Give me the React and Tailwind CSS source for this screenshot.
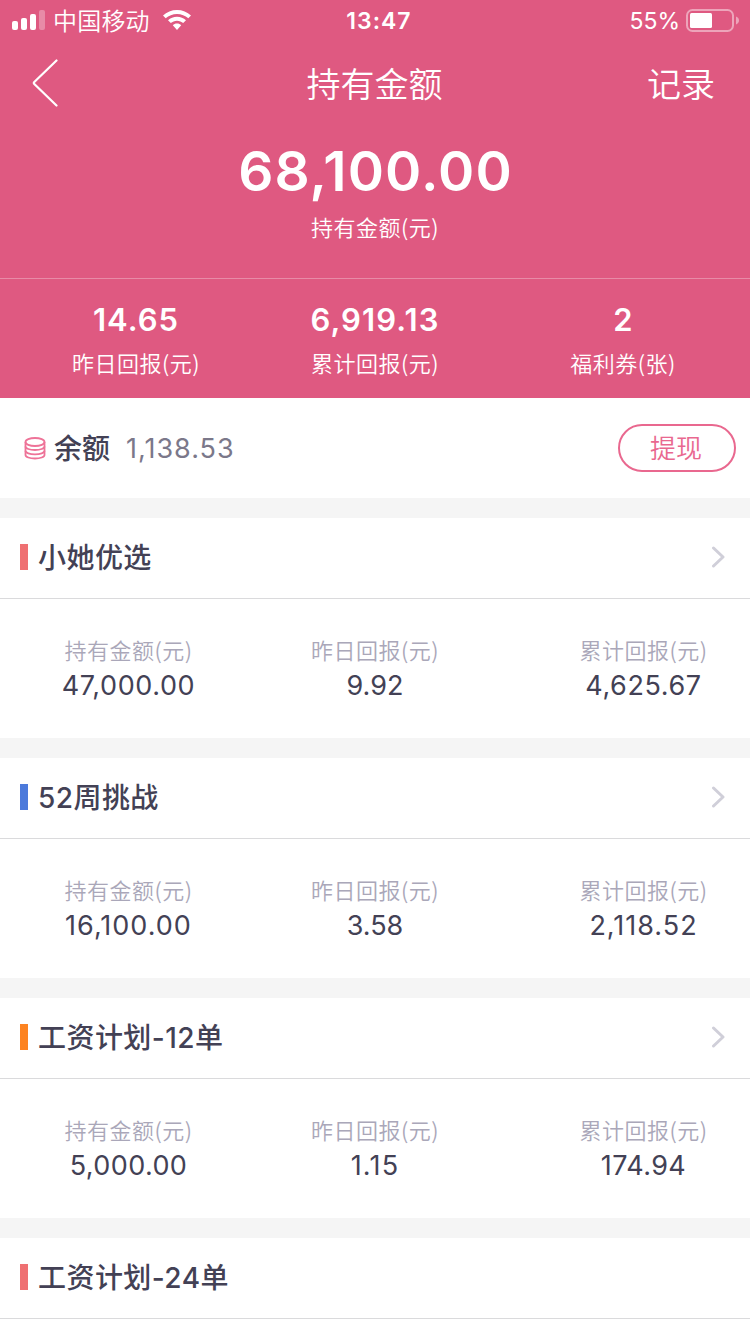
const summary = [
  { value: '14.65', label: '昨日回报(元)', spacing: 'tracking-[1px]' },
  { value: '6,919.13', label: '累计回报(元)', spacing: 'tracking-[1.1px]' },
  { value: '2', label: '福利券(张)', spacing: '' },
];

const plans = [
  {
    name: '小她优选',
    bar: 'bg-[#ef7072]',
    stats: [
      { label: '持有金额(元)', value: '47,000.00', spacing: 'tracking-[0.6px]' },
      { label: '昨日回报(元)', value: '9.92', spacing: '' },
      { label: '累计回报(元)', value: '4,625.67', spacing: 'tracking-[0.6px]' },
    ],
  },
  {
    name: '52周挑战',
    bar: 'bg-[#4c7adb]',
    stats: [
      { label: '持有金额(元)', value: '16,100.00', spacing: 'tracking-[1px]' },
      { label: '昨日回报(元)', value: '3.58', spacing: '' },
      { label: '累计回报(元)', value: '2,118.52', spacing: 'tracking-[1px]' },
    ],
  },
  {
    name: '工资计划-12单',
    bar: 'bg-[#fd8321]',
    stats: [
      { label: '持有金额(元)', value: '5,000.00', spacing: 'tracking-[0.4px]' },
      { label: '昨日回报(元)', value: '1.15', spacing: 'tracking-[1.2px]' },
      { label: '累计回报(元)', value: '174.94', spacing: 'tracking-[0.4px]' },
    ],
  },
  { name: '工资计划-24单', bar: 'bg-[#ef7072]' },
];

function StatusBar() {
  return (
    <div className="grid h-10 grid-cols-3 items-center pl-3 pr-[11px] text-[24px] leading-8">
      <div className="flex items-center">
        <svg width="33" height="20" viewBox="0 0 33 20" fill="#fff">
          <rect x="0" y="11" width="6" height="9" rx="2" />
          <rect x="9" y="8" width="6" height="12" rx="2" />
          <rect x="18" y="4" width="6" height="16" rx="2" />
          <rect x="27" y="0" width="6" height="20" rx="2" opacity="0.3" />
        </svg>
        <span className="ml-2 mt-1 whitespace-nowrap font-[350] tracking-[0.2px]">中国移动</span>
        <svg className="ml-[13px]" width="28" height="20" viewBox="0 0 28 20" fill="#fff">
          <path d="M14 0C8.600 0 3.700 2 0 5.500L2.700 8.300C5.700 5.500 9.700 3.900 14 3.900s8.300 1.600 11.300 4.400L28 5.500C24.300 2 19.400 0 14 0z" />
          <path d="M14 6.800c-3.500 0-6.600 1.300-9 3.500l2.800 2.800c1.600-1.500 3.800-2.400 6.200-2.400s4.600.9 6.200 2.400l2.800-2.800c-2.400-2.200-5.500-3.500-9-3.500z" />
          <path d="M14 13.600c-1.700 0-3.100.6-4.200 1.600L14 20l4.200-4.800c-1.100-1-2.500-1.600-4.200-1.600z" />
        </svg>
      </div>
      <span className="mt-0.5 pl-[7px] text-center text-[23px] font-semibold tracking-[1px]">13:47</span>
      <div className="flex items-center justify-end">
        <span className="mt-px text-[23px]">55%</span>
        <svg className="ml-[6px]" width="53" height="23" viewBox="0 0 53 23">
          <rect x="1" y="1" width="46" height="21" rx="5.500" fill="none" stroke="#fff" strokeOpacity="0.45" strokeWidth="2" />
          <rect x="4" y="4" width="22" height="15" rx="1.500" fill="#fff" />
          <path d="M50 7.500c2 .8 3 2.200 3 4s-1 3.200-3 4z" fill="#fff" fillOpacity="0.45" />
        </svg>
      </div>
    </div>
  );
}

function Stat({ label, value, spacing }) {
  return (
    <div className="flex flex-col items-center last:pl-[44px]">
      <span className="font-['Noto_Sans_CJK_SC',sans-serif] text-[22px] font-[350] leading-8 tracking-[0.5px] text-[#aaa7b9]">{label}</span>
      <span className={`mt-0.5 text-[27px] leading-[38px] text-[#434155] ${spacing}`}>{value}</span>
    </div>
  );
}

function Plan({ plan }) {
  return (
    <section className="mt-5 bg-white">
      <div className="flex h-[81px] items-center border-b border-[#dadadc] pl-5 pr-[25px]">
        <span className={`h-[26px] w-2 -translate-y-px ${plan.bar}`} />
        <h2 className="mb-px ml-[10px] flex-1 text-[28px] font-medium leading-10 tracking-[0.45px] text-[#434155]">{plan.name}</h2>
        {plan.stats && (
          <svg className="mb-[3px]" width="14" height="22" viewBox="0 0 14 22" fill="none" stroke="#d0cfd9" strokeWidth="3" strokeLinecap="round" strokeLinejoin="round">
            <path d="M2.500 2L12 11L2.500 20" />
          </svg>
        )}
      </div>
      {plan.stats ? (
        <div className="grid h-[139px] grid-cols-[257px_236px_1fr] pt-[34px]">
          {plan.stats.map((s) => (
            <Stat key={s.label} {...s} />
          ))}
        </div>
      ) : (
        <div className="h-[15px]" />
      )}
    </section>
  );
}

export default function App() {
  return (
    <div className="h-[1334px] w-[750px] overflow-hidden bg-[#f5f5f5] font-['Inter','Noto_Sans_CJK_SC',sans-serif]">
      <header className="h-[398px] bg-[#df5981] text-white">
        <StatusBar />
        <nav className="grid h-[88px] grid-cols-[1fr_auto_1fr] items-center pl-8 pr-[35px] text-[34px] font-[350] leading-[48px]">
          <svg className="mb-[2px]" width="26" height="48" viewBox="0 0 26 48" fill="none" stroke="#fff" strokeWidth="2.200" strokeLinecap="round" strokeLinejoin="round">
            <path d="M24.500 1.500L2.300 23q-1 1 0 2L24.500 46.500" />
          </svg>
          <h1 className="mt-[2px] pl-[2px]">持有金额</h1>
          <span className="mt-[2px] text-right">记录</span>
        </nav>
        <div className="flex h-[151px] flex-col items-center border-b border-white/30 pt-[9px]">
          <span className="pl-px text-[55px] font-semibold leading-[68px] tracking-[1.1px]">68,100.00</span>
          <span className="mt-[5px] font-['Noto_Sans_CJK_SC',sans-serif] text-[22px] font-[350] leading-8 tracking-[0.5px]">持有金额(元)</span>
        </div>
        <div className="grid grid-cols-[272px_206px_1fr] pt-[21px]">
          {summary.map((s) => (
            <div key={s.label} className="flex flex-col items-center last:pl-[18px]">
              <span className={`text-[31px] font-semibold leading-10 ${s.spacing}`}>{s.value}</span>
              <span className="mt-[6px] font-['Noto_Sans_CJK_SC',sans-serif] text-[22px] font-[350] leading-8 tracking-[0.5px]">{s.label}</span>
            </div>
          ))}
        </div>
      </header>

      <section className="flex h-[100px] items-center bg-white pl-6 pr-[14px]">
        <svg width="22" height="24" viewBox="0 0 22 24" fill="none" stroke="#ee7398" strokeWidth="1.800">
          <ellipse cx="11" cy="6" rx="9.500" ry="4" />
          <path d="M1.500 6v13c0 2 4.200 3.500 9.500 3.500s9.500-1.500 9.500-3.500V6" />
          <path d="M1.500 10.500c0 2 4.200 3.500 9.500 3.500s9.500-1.500 9.500-3.500M1.500 14.800c0 2 4.200 3.500 9.500 3.500s9.500-1.500 9.500-3.500" />
        </svg>
        <span className="ml-2 mt-[2px] text-[28px] font-medium leading-10 text-[#434155]">余额</span>
        <span className="ml-4 mt-[2px] flex-1 text-[27px] leading-10 tracking-[1px] text-[#7b788a]">1,138.53</span>
        <button className="h-12 w-[118px] rounded-full border-2 border-[#e9688f] pr-0.5 pt-0.5 text-[26px] font-[350] leading-[42px] text-[#e9688f]">
          提现
        </button>
      </section>

      {plans.map((p) => (
        <Plan key={p.name} plan={p} />
      ))}
    </div>
  );
}
